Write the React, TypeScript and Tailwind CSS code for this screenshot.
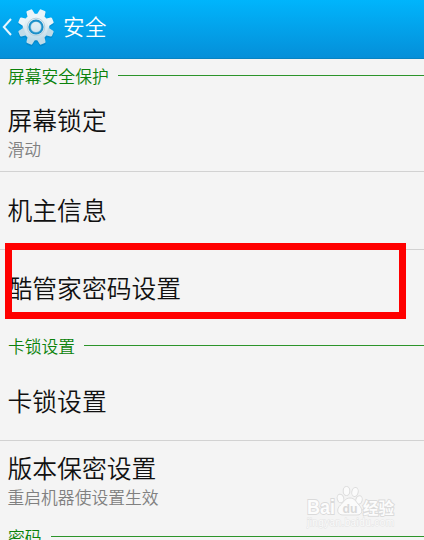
import React from 'react';

const SectionTitle = ({ title }: { title: string }) => (
  <div className="flex h-[33px] items-center gap-[9px] pl-2 text-[16.8px] leading-[33px] text-[#0b820b]">
    <h2 className="whitespace-nowrap pt-0.5 font-[350]">{title}</h2>
    <span className="h-px flex-1 bg-[#2c942a]"></span>
  </div>
);

type RowProps = { title: string; note?: string; className: string };

const Row = ({ title, note, className }: RowProps) => (
  <div className={`flex flex-col justify-center pl-[7.5px] ${className}`}>
    <p className="text-[24.8px] font-[350] leading-[34px] text-[#111111]">{title}</p>
    {note && <p className="text-[16.8px] font-[350] leading-[26px] text-[#808080]">{note}</p>}
  </div>
);

const teeth = [22.5, 67.5, 112.5, 157.5, 202.5, 247.5, 292.5, 337.5];

const Gear = () => (
  <svg className="ml-1 h-[44px] w-[40px] shrink-0" viewBox="-20 -22 40 44">
    <defs>
      <linearGradient id="metal" gradientUnits="userSpaceOnUse" x1="0" y1="-18" x2="0" y2="18">
        <stop offset="0" stopColor="#f4fbfe" />
        <stop offset="0.5" stopColor="#dcebf2" />
        <stop offset="1" stopColor="#b5d5e5" />
      </linearGradient>
    </defs>
    <g fill="#006ba8" opacity="0.35" transform="translate(0 1.5)">
      <circle r="14" />
      {teeth.map((angle) => (
        <path key={angle} d="M-4.2 -11L-3.2 -17.3Q-3 -18.3 -2 -18.3H2Q3 -18.3 3.2 -17.3L4.2 -11Z" transform={`rotate(${angle})`} />
      ))}
    </g>
    <circle r="13.3" fill="url(#metal)" />
    {teeth.map((angle) => (
      <path
        key={angle}
        d="M-4.2 -11L-3.2 -17.2Q-3 -18.2 -2 -18.2H2Q3 -18.2 3.2 -17.2L4.2 -11Z"
        fill={angle > 90 && angle < 270 ? '#bfdbe8' : '#e9f4f9'}
        transform={`rotate(${angle})`}
      />
    ))}
    <circle r="12" fill="url(#metal)" />
    <circle r="8.8" fill="none" stroke="#b9d1dd" strokeWidth="1" />
    <circle r="7.6" fill="#1b8fc9" />
    <circle r="5.6" fill="#8fc9e3" />
    <circle r="4.9" fill="url(#metal)" />
  </svg>
);

const Watermark = () => (
  <div className="absolute left-[306px] top-[484px] h-[46px] w-[92px]">
    <svg className="h-full w-full" viewBox="0 0 92 46">
      <g fill="#fbfbfb" stroke="#dddddd" strokeWidth="1">
        <ellipse cx="34.5" cy="14.5" rx="3.3" ry="4.3" transform="rotate(-15 34.5 14.5)" />
        <ellipse cx="40.5" cy="7" rx="3.3" ry="4.5" />
        <ellipse cx="49" cy="8" rx="3.2" ry="4.5" transform="rotate(12 49 8)" />
        <ellipse cx="53" cy="16" rx="3.2" ry="4.3" transform="rotate(15 53 16)" />
        <path d="M44 14C39 14 38 18 34.5 21C30 25 31 31 37 31H51C57 31 57 25 53 21C50 18 49 14 44 14Z" />
      </g>
      <g fill="#fcfcfc" stroke="#dadada" strokeWidth="1.8" paintOrder="stroke" fontFamily="Liberation Sans, Noto Sans CJK SC, sans-serif" fontWeight="bold">
        <text x="1" y="30" fontSize="20" textLength="28" lengthAdjust="spacingAndGlyphs">Bai</text>
        <text x="57" y="30" fontSize="15.5" textLength="31">经验</text>
      </g>
      <text x="36.5" y="28.5" fontSize="13" textLength="15" lengthAdjust="spacingAndGlyphs" fill="#d9d9d9" fontFamily="Liberation Sans, sans-serif" fontWeight="bold">du</text>
      <text x="1" y="42" fontSize="10" textLength="87" fill="#fbfbfb" stroke="#e4e4e4" strokeWidth="1" paintOrder="stroke" fontFamily="Liberation Sans, sans-serif">jingyan.baidu.com</text>
    </svg>
  </div>
);

const App = () => {
  return (
    <main className="relative h-[540px] w-[424px] overflow-hidden bg-[#f4f4f4] font-['Noto_Sans_CJK_SC',sans-serif]">
      <header className="flex h-[59px] items-center border-b border-[#0783c2] bg-linear-to-b from-[#00b5fc] to-[#058fd9] pb-1">
        <svg className="ml-[2px] h-[18px] w-[10px]" viewBox="0 0 10 18">
          <path d="M9 1L1.8 9L9 17" fill="none" stroke="#e5f6ff" strokeWidth="2" />
        </svg>
        <Gear />
        <h1 className="ml-[7px] pb-0.5 text-[21.7px] font-[350] leading-8 text-white">安全</h1>
      </header>

      <SectionTitle title="屏幕安全保护" />
      <Row title="屏幕锁定" note="滑动" className="h-[80px] border-b border-[#d2d2d2] pt-px" />
      <Row title="机主信息" className="h-[78px] border-b border-[#d2d2d2] pb-[3px]" />
      <Row title="酷管家密码设置" className="h-[79px] pb-1.5" />

      <SectionTitle title="卡锁设置" />
      <Row title="卡锁设置" className="h-[79px] border-b border-[#d2d2d2] pb-0.5" />
      <Row title="版本保密设置" note="重启机器使设置生效" className="h-[79px] pb-0.5" />

      <SectionTitle title="密码" />

      <div className="absolute left-[5px] top-[243px] h-[76px] w-[401px] border-[7px] border-[#ff0000]"></div>
      <Watermark />
    </main>
  );
};

export default App;
